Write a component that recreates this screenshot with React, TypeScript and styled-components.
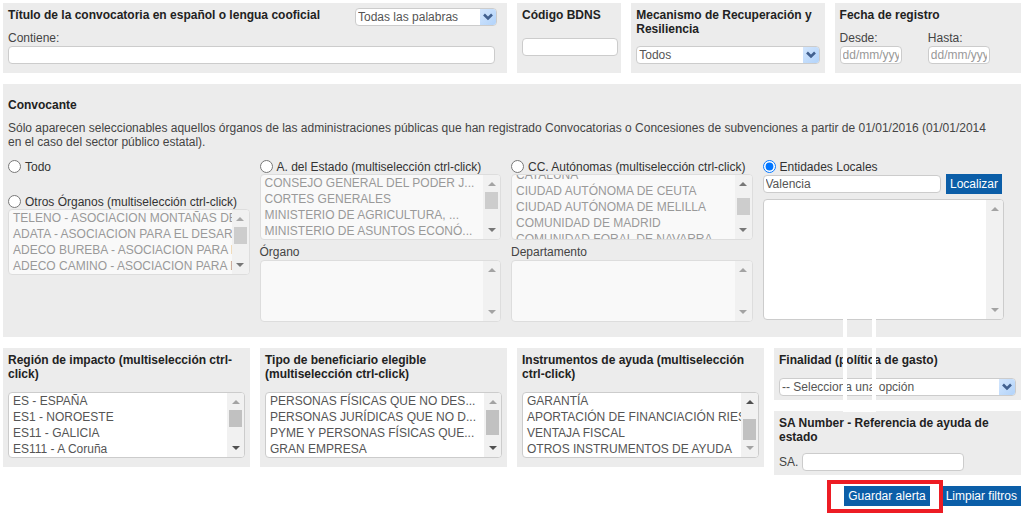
import React, { useLayoutEffect, useRef } from "react";
import styled, { createGlobalStyle, css } from "styled-components";

const GlobalStyle = createGlobalStyle`
  *, *::before, *::after { box-sizing: border-box; }
  body {
    margin: 0;
    background: #fff;
    color: #444;
    font-family: "Liberation Sans", Arial, sans-serif;
    font-size: 12px;
    line-height: 14px;
  }
  input, select, button { font: inherit; }
`;

const Page = styled.main`
  display: flex;
  flex-direction: column;
  gap: 11px;
  padding: 3px 3px 7px;
`;

const TopRow = styled.div`
  display: grid;
  grid-template-columns: 503fr 104fr 193fr 186fr;
  gap: 10px;
`;

const BottomRow = styled.div`
  display: grid;
  grid-template-columns: repeat(4, minmax(0, 1fr));
  gap: 10px;
  align-items: start;
`;

const paddings = {
  normal: "5px 5px 9px",
  compact: "5px 5px 4px",
  tall: "14px 17px 15px 5px",
};

const Panel = styled.section<{ $pad?: keyof typeof paddings }>`
  position: relative;
  display: flex;
  flex-direction: column;
  min-width: 0;
  padding: ${(p) => paddings[p.$pad ?? "normal"]};
  background: #ececec;
`;

const Stack = styled.div`
  display: flex;
  flex-direction: column;
  gap: 11px;
`;

const Heading = styled.h2`
  margin: 0;
  color: #222;
  font-size: 12px;
  font-weight: bold;
  line-height: 14px;
`;

const TitleLine = styled.div`
  display: flex;
  justify-content: space-between;
  align-items: flex-start;
  padding-right: 5px;
`;

const Bottom = styled.div`
  margin-top: auto;
  padding-top: 5px;
`;

const FieldLabel = styled.label`
  display: block;
  line-height: 15px;
`;

const Dates = styled.div`
  display: grid;
  grid-template-columns: 1fr 1fr;
  margin-top: auto;
`;

const boxed = css`
  border: 1px solid #ccc;
  border-radius: 4px;
  background: #fff;
  color: #555;
`;

const TextInput = styled.input<{ $width?: string }>`
  ${boxed}
  display: block;
  width: ${(p) => p.$width ?? "100%"};
  height: 18px;
  padding: 0 2px;
  &::placeholder { color: #999; opacity: 1; }
`;

const SelectFrame = styled.div<{ $width?: string }>`
  ${boxed}
  display: flex;
  position: relative;
  width: ${(p) => p.$width ?? "100%"};
  height: 18px;
  overflow: hidden;
`;

const PlainSelect = styled.select`
  appearance: none;
  flex: 1;
  min-width: 0;
  padding: 0 18px 0 2px;
  border: 0;
  background: transparent;
  color: #555;
  line-height: 16px;
`;

const ArrowBox = styled.svg`
  position: absolute;
  top: 0;
  right: 0;
  width: 16px;
  height: 16px;
  background: linear-gradient(135deg, #d3e6fd, #b2d3fa);
  pointer-events: none;
`;

const Intro = styled.p`
  margin: 9px 0 10px;
  padding-right: 8px;
  line-height: 14px;
`;

const Columns = styled.div`
  display: grid;
  grid-template-columns: repeat(4, minmax(0, 1fr));
  gap: 10px;
`;

const Column = styled.div`
  min-width: 0;
`;

const RadioLabel = styled.label`
  display: flex;
  align-items: center;
  gap: 4px;
  height: 15px;
  color: #333;
  white-space: nowrap;
`;

const Radio = styled.input`
  width: 13px;
  height: 13px;
  margin: 0;
  accent-color: #0075ff;
`;

const OtherOrgans = styled.div`
  margin-top: 20px;
`;

const ListFrame = styled.div<{ $height: number; $off?: boolean }>`
  ${boxed}
  display: flex;
  height: ${(p) => p.$height}px;
  overflow: hidden;
  border-color: ${(p) => (p.$off ? "#ddd" : "#ccc")};
  background: ${(p) => (p.$off ? "#f9f9f9" : "#fff")};
`;

const NativeList = styled.select<{ $off?: boolean }>`
  flex: 1;
  min-width: 0;
  height: 100%;
  padding: 0;
  border: 0;
  border-radius: 0;
  background: transparent;
  overflow: hidden;
  opacity: 1;
  option {
    height: 16px;
    padding: 1px 0 1px 4px;
    color: ${(p) => (p.$off ? "#999" : "#555")};
  }
`;

const Bar = styled.div`
  display: flex;
  flex-direction: column;
  align-items: center;
  flex: 0 0 17px;
  padding: 5px 2px;
  background: #f1f1f1;
`;

const Arrow = styled.svg`
  flex: none;
  width: 8px;
  height: 8px;
`;

const Track = styled.div`
  flex: 1;
  align-self: stretch;
  padding: 4px 0;
`;

const Thumb = styled.div<{ $top: number; $height: number; $off?: boolean }>`
  height: ${(p) => p.$height}px;
  margin-top: ${(p) => p.$top}px;
  background: ${(p) => (p.$off ? "#cdcdcd" : "#c1c1c1")};
`;

const SearchLine = styled.div`
  display: flex;
  align-items: center;
  gap: 5px;
  margin-bottom: 5px;
  padding-right: 2px;
`;

const BlueButton = styled.button`
  flex: none;
  height: 20px;
  padding: 0 4px;
  border: 0;
  background: #0b5ea8;
  color: #fff;
  line-height: 20px;
  white-space: nowrap;
`;

const SaLine = styled.div`
  display: flex;
  align-items: center;
  gap: 4px;
  margin-top: 9px;
`;

const Actions = styled.div`
  display: flex;
  justify-content: flex-end;
  gap: 12px;
`;

const Marked = styled.div`
  position: relative;
  display: flex;
`;

const RedFrame = styled.span`
  position: absolute;
  inset: -6px -13px -7px -17px;
  border: 4px solid #ed1c24;
  pointer-events: none;
`;

const WhiteFrame = styled.span`
  position: absolute;
  z-index: 1;
  top: -29px;
  left: 69px;
  width: 33px;
  height: 93px;
  border: 4px solid #fff;
  border-top: 0;
  pointer-events: none;
`;

const Gap = styled.div<{ $size?: number }>`
  height: ${(p) => p.$size ?? 11}px;
`;

function Dropdown({ id, label, value, width }: { id: string; label: string; value: string; width?: string }) {
  return (
    <SelectFrame $width={width}>
      <PlainSelect id={id} aria-label={label} defaultValue={value}>
        <option>{value}</option>
      </PlainSelect>
      <ArrowBox viewBox="0 0 16 16" aria-hidden="true">
        <path d="M4 5.5 L8 9.5 L12 5.5" fill="none" stroke="#41608f" strokeWidth="2.6" />
      </ArrowBox>
    </SelectFrame>
  );
}

type ListProps = {
  id?: string;
  label: string;
  options?: string[];
  height?: number;
  off?: boolean;
  scroll?: number;
  thumb?: [number, number];
  up?: string;
  down?: string;
};

function ListBox({ id, label, options = [], height = 66, off, scroll = 0, thumb, up = "#a3a3a3", down = "#a3a3a3" }: ListProps) {
  const ref = useRef<HTMLSelectElement>(null);
  useLayoutEffect(() => {
    if (ref.current) ref.current.scrollTop = scroll;
  }, [scroll]);
  return (
    <ListFrame $height={height} $off={off}>
      <NativeList id={id} ref={ref} multiple size={4} aria-label={label} disabled={off} $off={off}>
        {options.map((o) => (
          <option key={o}>{o}</option>
        ))}
      </NativeList>
      <Bar aria-hidden="true">
        <Arrow viewBox="0 0 8 8"><path d="M0 6 L4 2 L8 6 Z" fill={up} /></Arrow>
        <Track>{thumb && <Thumb $top={thumb[0]} $height={thumb[1]} $off={off} />}</Track>
        <Arrow viewBox="0 0 8 8"><path d="M0 2 L4 6 L8 2 Z" fill={down} /></Arrow>
      </Bar>
    </ListFrame>
  );
}

function Choice({ text, checked }: { text: string; checked?: boolean }) {
  return (
    <RadioLabel>
      <Radio type="radio" name="convocante" defaultChecked={checked} />
      {text}
    </RadioLabel>
  );
}

export default function App() {
  return (
    <>
      <GlobalStyle />
      <Page>
        <TopRow>
          <Panel>
            <TitleLine>
              <Heading>Título de la convocatoria en español o lengua cooficial</Heading>
              <Dropdown id="modo" label="Modo de búsqueda" value="Todas las palabras" width="142px" />
            </TitleLine>
            <Bottom>
              <FieldLabel htmlFor="contiene">Contiene:</FieldLabel>
              <TextInput id="contiene" $width="calc(100% - 7px)" />
            </Bottom>
          </Panel>
          <Panel>
            <Heading>Código BDNS</Heading>
            <Gap $size={16} />
            <TextInput aria-label="Código BDNS" $width="calc(100% + 2px)" />
          </Panel>
          <Panel>
            <Heading>Mecanismo de Recuperación y Resiliencia</Heading>
            <Bottom>
              <Dropdown id="mecanismo" label="Mecanismo de Recuperación y Resiliencia" value="Todos" />
            </Bottom>
          </Panel>
          <Panel>
            <Heading>Fecha de registro</Heading>
            <Dates>
              <div>
                <FieldLabel htmlFor="desde">Desde:</FieldLabel>
                <TextInput id="desde" placeholder="dd/mm/yyyy" $width="62px" />
              </div>
              <div>
                <FieldLabel htmlFor="hasta">Hasta:</FieldLabel>
                <TextInput id="hasta" placeholder="dd/mm/yyyy" $width="62px" />
              </div>
            </Dates>
          </Panel>
        </TopRow>

        <Panel $pad="tall">
          <Heading>Convocante</Heading>
          <Intro>
            Sólo aparecen seleccionables aquellos órganos de las administraciones públicas que han registrado
            Convocatorias o Concesiones de subvenciones a partir de 01/01/2016 (01/01/2014 en el caso del sector
            público estatal).
          </Intro>
          <Columns>
            <Column>
              <Choice text="Todo" />
              <OtherOrgans>
                <Choice text="Otros Órganos (multiselección ctrl-click)" />
                <ListBox
                  label="Otros Órganos"
                  off
                  thumb={[0, 17]}
                  up="#a9a9a9"
                  down="#777"
                  options={[
                    "TELENO - ASOCIACION MONTAÑAS DEL TELENO",
                    "ADATA - ASOCIACION PARA EL DESARROLLO",
                    "ADECO BUREBA - ASOCIACION PARA EL DESARROLLO",
                    "ADECO CAMINO - ASOCIACION PARA EL DESARROLLO",
                  ]}
                />
              </OtherOrgans>
            </Column>
            <Column>
              <Choice text="A. del Estado (multiselección ctrl-click)" />
              <ListBox
                label="A. del Estado"
                off
                thumb={[0, 17]}
                down="#777"
                options={[
                  "CONSEJO GENERAL DEL PODER J...",
                  "CORTES GENERALES",
                  "MINISTERIO DE AGRICULTURA, ...",
                  "MINISTERIO DE ASUNTOS ECONÓ...",
                ]}
              />
              <Gap $size={5} />
              <FieldLabel htmlFor="organo">Órgano</FieldLabel>
              <ListBox id="organo" label="Órgano" off height={62} />
            </Column>
            <Column>
              <Choice text="CC. Autónomas (multiselección ctrl-click)" />
              <ListBox
                label="CC. Autónomas"
                off
                scroll={8}
                thumb={[6, 17]}
                up="#777"
                down="#777"
                options={[
                  "CATALUÑA",
                  "CIUDAD AUTÓNOMA DE CEUTA",
                  "CIUDAD AUTÓNOMA DE MELILLA",
                  "COMUNIDAD DE MADRID",
                  "COMUNIDAD FORAL DE NAVARRA",
                  "COMUNITAT VALENCIANA",
                ]}
              />
              <Gap $size={5} />
              <FieldLabel htmlFor="departamento">Departamento</FieldLabel>
              <ListBox id="departamento" label="Departamento" off height={62} />
            </Column>
            <Column>
              <Choice text="Entidades Locales" checked />
              <SearchLine>
                <TextInput aria-label="Entidad local" defaultValue="Valencia" />
                <BlueButton type="button">Localizar</BlueButton>
              </SearchLine>
              <ListBox label="Entidades Locales" height={121} />
            </Column>
          </Columns>
        </Panel>

        <BottomRow>
          <Panel>
            <Heading>Región de impacto (multiselección ctrl-click)</Heading>
            <Gap />
            <ListBox
              label="Región de impacto"
              thumb={[0, 17]}
              down="#505050"
              options={["ES - ESPAÑA", "ES1 - NOROESTE", "ES11 - GALICIA", "ES111 - A Coruña"]}
            />
          </Panel>
          <Panel>
            <Heading>Tipo de beneficiario elegible (multiselección ctrl-click)</Heading>
            <Gap />
            <ListBox
              label="Tipo de beneficiario elegible"
              thumb={[0, 25]}
              down="#505050"
              options={[
                "PERSONAS FÍSICAS QUE NO DES...",
                "PERSONAS JURÍDICAS QUE NO D...",
                "PYME Y PERSONAS FÍSICAS QUE...",
                "GRAN EMPRESA",
              ]}
            />
          </Panel>
          <Panel>
            <Heading>Instrumentos de ayuda (multiselección ctrl-click)</Heading>
            <Gap />
            <ListBox
              label="Instrumentos de ayuda"
              thumb={[9, 21]}
              up="#505050"
              options={[
                "GARANTÍA",
                "APORTACIÓN DE FINANCIACIÓN RIESGO",
                "VENTAJA FISCAL",
                "OTROS INSTRUMENTOS DE AYUDA",
              ]}
            />
          </Panel>
          <Stack>
            <Panel $pad="compact">
              <Heading>Finalidad (política de gasto)</Heading>
              <Gap />
              <Dropdown id="finalidad" label="Finalidad" value="-- Selecciona una opción" />
              <WhiteFrame aria-hidden="true" />
            </Panel>
            <Panel $pad="compact">
              <Heading>SA Number - Referencia de ayuda de estado</Heading>
              <SaLine>
                <label htmlFor="sa">SA.</label>
                <TextInput id="sa" $width="162px" />
              </SaLine>
            </Panel>
            <Actions>
              <Marked>
                <BlueButton type="button">Guardar alerta</BlueButton>
                <RedFrame aria-hidden="true" />
              </Marked>
              <BlueButton type="button">Limpiar filtros</BlueButton>
            </Actions>
          </Stack>
        </BottomRow>
      </Page>
    </>
  );
}
